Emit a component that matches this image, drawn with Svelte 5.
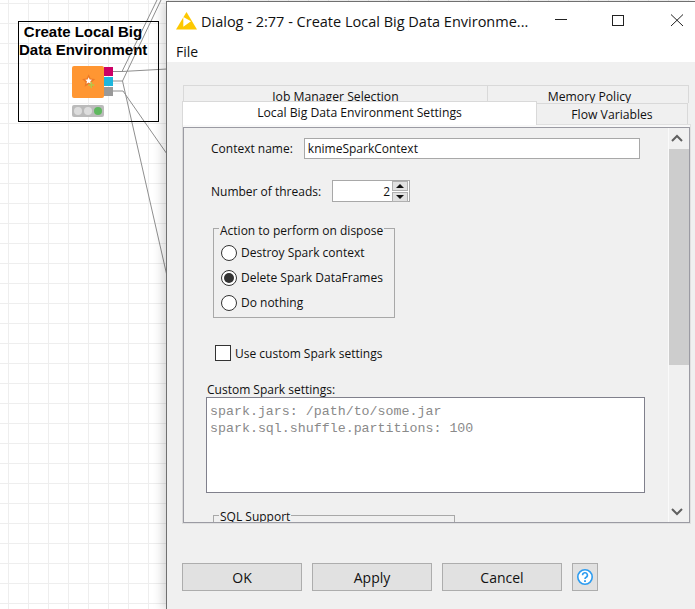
<script>
	const disposeOptions = [
		{ label: 'Destroy Spark context', checked: false },
		{ label: 'Delete Spark DataFrames', checked: true },
		{ label: 'Do nothing', checked: false }
	];
</script>

<div class="canvas">
	<svg class="wires" width="167" height="300" viewBox="0 0 167 300">
		<g fill="none" stroke="#8f8f8f" stroke-width="1">
			<path d="M113 71.500H122L167 69" />
			<path d="M122 71.500L157 0" />
			<path d="M113 81H122.500L161 0" />
			<path d="M122.500 81L167 276" />
			<path d="M113 91H123L167 154" />
		</g>
	</svg>

	<div class="node">
		<div class="node-title">Create Local Big<br />Data Environment</div>
		<div class="node-body">
			<div class="node-icon">
				<svg width="20" height="20" viewBox="0 0 20 20">
					<g transform="translate(3 1) scale(.85)">
						<path d="M9 1.500l2.300 5 5.400.6-4 3.700 1.100 5.400L9 13.500l-4.800 2.700 1.100-5.400-4-3.700 5.400-.6z" fill="#ee7a26" />
						<path d="M9 5l1.200 2.600 2.800.3-2 1.900.5 2.800L9 11.300l-2.500 1.300.5-2.800-2-1.900 2.800-.3z" fill="#fff" />
					</g>
					<path d="M13.300 10v6M10.300 13h6" stroke="#b5c84a" stroke-width="1.400" fill="none" />
				</svg>
			</div>
			<div class="ports">
				<span class="port pink"></span>
				<span class="port cyan"></span>
				<span class="port grey"></span>
			</div>
		</div>
		<div class="traffic">
			<span class="lamp"></span>
			<span class="lamp"></span>
			<span class="lamp on"></span>
		</div>
	</div>

	<div class="dialog">
		<div class="titlebar">
			<svg class="logo" width="21" height="18" viewBox="0 0 21 18">
				<path d="M10.500 0L21 17.500H0z" fill="#fdc800" />
				<path d="M7.300 5L15 9.300 7.300 14.700z" fill="#fff" />
			</svg>
			<span class="title">Dialog - 2:77 - Create Local Big Data Environme...</span>
			<div class="controls">
				<svg width="14" height="14" viewBox="0 0 14 14"><path d="M1 5.500H13" stroke="#222" fill="none" /></svg>
				<svg width="14" height="14" viewBox="0 0 14 14"><rect x=".5" y="1.500" width="11" height="10" stroke="#222" fill="none" /></svg>
				<svg width="14" height="14" viewBox="0 0 14 14"><path d="M1 .5L13 12M13 .5L1 12" stroke="#222" fill="none" /></svg>
			</div>
		</div>
		<div class="menubar">File</div>

		<div class="dialog-body">
			<div class="tabs">
				<div class="tab-row back">
					<div class="tab job">Job Manager Selection</div>
					<div class="tab memory">Memory Policy</div>
				</div>
				<div class="tab-row front">
					<div class="tab active">Local Big Data Environment Settings</div>
					<div class="tab flow">Flow Variables</div>
				</div>
			</div>

			<div class="panel-outer">
				<div class="panel">
					<div class="scroll-content">
						<div class="row context">
							<span>Context name:</span>
							<div class="input">knimeSparkContext</div>
						</div>
						<div class="row threads">
							<span>Number of threads:</span>
							<div class="spinner">
								<span class="spin-value">2</span>
								<div class="spin-buttons">
									<span class="spin-btn"><i class="up"></i></span>
									<span class="spin-btn"><i class="down"></i></span>
								</div>
							</div>
						</div>
						<div class="group dispose">
							<span class="legend">Action to perform on dispose</span>
							{#each disposeOptions as opt}
								<div class="radio-row">
									<span class="radio" class:checked={opt.checked}></span>
									<span>{opt.label}</span>
								</div>
							{/each}
						</div>
						<div class="check-row">
							<span class="checkbox"></span>
							<span>Use custom Spark settings</span>
						</div>
						<div class="custom-label">Custom Spark settings:</div>
						<div class="textarea">spark.jars: /path/to/some.jar
spark.sql.shuffle.partitions: 100</div>
						<div class="group sql">
							<span class="legend">SQL Support</span>
						</div>
					</div>
					<div class="scrollbar">
						<svg width="18" height="21" viewBox="0 0 18 21"><path d="M3 13l5-5 5 5" stroke="#606060" stroke-width="2" fill="none" /></svg>
						<div class="track"><div class="thumb"></div></div>
						<svg width="18" height="21" viewBox="0 0 18 21"><path d="M3 8l5 5 5-5" stroke="#606060" stroke-width="2" fill="none" /></svg>
					</div>
				</div>
			</div>

			<div class="buttons">
				<button>OK</button>
				<button>Apply</button>
				<button>Cancel</button>
				<button class="help" aria-label="Help">
					<svg width="18" height="18" viewBox="0 0 18 18">
						<circle cx="9" cy="9" r="7.200" stroke="#2d9cf0" stroke-width="1.600" fill="#fff" />
						<path d="M6.600 7.200a2.400 2.400 0 1 1 3.600 2c-.9.5-1.200 1-1.200 1.900" stroke="#2d9cf0" stroke-width="1.600" fill="none" />
						<rect x="8.100" y="12.200" width="1.800" height="1.800" fill="#2d9cf0" />
					</svg>
				</button>
			</div>
		</div>
	</div>
</div>

<style>
	:global(body) {
		margin: 0;
		overflow: hidden;
	}

	.canvas {
		position: relative;
		width: 695px;
		height: 609px;
		overflow: hidden;
		background-color: #fff;
		background-image: linear-gradient(to right, #eeeeee 1px, transparent 1px),
			linear-gradient(to bottom, #eeeeee 1px, transparent 1px);
		background-size: 20px 20px;
		background-position: 8px 3px;
		font-family: 'Open Sans', 'Noto Sans', sans-serif;
		color: #111;
	}

	.wires {
		position: absolute;
		left: 0;
		top: 0;
	}

	.node {
		position: absolute;
		left: 18px;
		top: 21px;
		width: 139px;
		height: 99px;
		border: 1px solid #000;
		font-family: 'Liberation Sans', Arial, sans-serif;
	}

	.node-title {
		font-weight: bold;
		font-size: 15px;
		line-height: 18px;
		text-align: center;
		height: 44px;
		color: #000;
		padding: 1px 11px 0 0;
		box-sizing: border-box;
		white-space: nowrap;
	}

	.node-body {
		display: flex;
		margin-left: 53px;
		height: 32px;
	}

	.node-icon {
		width: 32px;
		height: 32px;
		background: #ff9632;
		border-radius: 2px;
		display: flex;
		align-items: center;
		justify-content: center;
	}

	.ports {
		display: flex;
		flex-direction: column;
		gap: 1px;
		padding-top: 1px;
	}

	.port {
		width: 9px;
		height: 9px;
	}

	.pink {
		background: #cc0066;
	}
	.cyan {
		background: #1eb6dc;
	}
	.grey {
		background: #999;
	}

	.traffic {
		display: flex;
		align-items: center;
		justify-content: space-between;
		box-sizing: border-box;
		width: 32px;
		height: 12px;
		margin: 7px 0 0 53px;
		padding: 0 2px;
		background: #bbb;
		border-radius: 2px;
	}

	.lamp {
		width: 8px;
		height: 8px;
		border-radius: 50%;
		background: #ddd;
	}

	.lamp.on {
		background: #5fb85f;
	}

	.dialog {
		position: absolute;
		left: 166px;
		top: 1px;
		width: 529px;
		height: 608px;
		border-left: 1px solid #707070;
		border-top: 1px solid #707070;
		box-sizing: border-box;
		display: flex;
		flex-direction: column;
		background: #fff;
		box-shadow: -3px 0 10px rgba(0, 0, 0, 0.18);
	}

	.titlebar {
		display: flex;
		align-items: center;
		height: 38px;
		padding: 0 11px 0 9px;
		flex-shrink: 0;
	}

	.logo {
		flex-shrink: 0;
	}

	.title {
		margin-left: 4px;
		font-size: 14.5px;
		white-space: nowrap;
	}

	.controls {
		display: flex;
		gap: 44px;
		margin-left: auto;
	}

	.menubar {
		height: 22px;
		line-height: 24px;
		font-size: 14px;
		padding-left: 9px;
		flex-shrink: 0;
	}

	.dialog-body {
		flex: 1;
		background: #f0f0f0;
		padding: 23px 0 0 15px;
		font-size: 12px;
	}

	.tabs {
		width: 508px;
		height: 39px;
		font-size: 12.2px;
	}

	.tab-row {
		display: flex;
	}

	.tab {
		box-sizing: border-box;
		text-align: center;
		border: 1px solid #d9d9d9;
		white-space: nowrap;
	}

	.back {
		height: 18px;
		padding-left: 1px;
	}

	.back .tab {
		height: 18px;
		line-height: 22px;
		border-bottom: none;
		overflow: hidden;
	}

	.job {
		width: 305px;
	}

	.memory {
		width: 201px;
		padding-left: 3px;
		border-left: none;
	}

	.front {
		height: 23px;
		align-items: flex-start;
		margin-top: -2px;
	}

	.active {
		width: 355px;
		height: 24px;
		line-height: 21px;
		background: #fff;
		border-bottom: none;
		position: relative;
		z-index: 1;
	}

	.flow {
		width: 151px;
		height: 21px;
		margin-top: 2px;
		line-height: 22px;
		border-left: none;
		border-bottom: none;
	}

	.panel-outer {
		box-sizing: border-box;
		width: 509px;
		height: 400px;
		background: #f8f8f8;
		border: 1px solid #e0e0e0;
		border-left-color: #d9d9d9;
		padding: 2px 0 1px 0;
	}

	.panel {
		box-sizing: border-box;
		height: 396px;
		width: 507px;
		border: 1px solid #9b9ba3;
		background: #f0f0f0;
		display: flex;
		overflow: hidden;
	}

	.scroll-content {
		flex: 1;
		min-width: 0;
		position: relative;
		overflow: hidden;
	}

	.row {
		display: flex;
		align-items: center;
		margin-left: 27px;
	}

	.context {
		margin-top: 10px;
		height: 21px;
		gap: 11px;
		line-height: 22px;
	}

	.input {
		box-sizing: border-box;
		width: 336px;
		height: 21px;
		line-height: 20px;
		border: 1px solid #a8a8a8;
		background: #fff;
		padding-left: 3px;
	}

	.threads {
		margin-top: 21px;
		height: 22px;
		gap: 11px;
	}

	.spinner {
		box-sizing: border-box;
		width: 78px;
		height: 22px;
		border: 1px solid #a8a8a8;
		background: #fff;
		display: flex;
		align-items: center;
		justify-content: flex-end;
		padding-right: 1px;
	}

	.spin-value {
		margin-right: 2px;
	}

	.spin-buttons {
		display: flex;
		flex-direction: column;
		gap: 1px;
	}

	.spin-btn {
		width: 14px;
		height: 8px;
		background: #e1e1e1;
		border: 1px solid #b0b0b0;
		display: flex;
		align-items: center;
		justify-content: center;
	}

	.spin-btn i {
		width: 0;
		height: 0;
		border-left: 4px solid transparent;
		border-right: 4px solid transparent;
	}

	.up {
		border-bottom: 4px solid #111;
	}

	.down {
		border-top: 4px solid #111;
	}

	.group {
		position: relative;
		box-sizing: border-box;
		border: 1px solid #a8a8a8;
		margin-left: 29px;
	}

	.legend {
		position: absolute;
		left: 5px;
		top: -6px;
		padding: 0 1px;
		background: #f0f0f0;
		line-height: 16px;
		white-space: nowrap;
	}

	.sql .legend {
		top: -7px;
	}

	.dispose {
		width: 182px;
		height: 90px;
		margin-top: 26px;
		padding-top: 11px;
	}

	.radio-row {
		display: flex;
		align-items: center;
		gap: 4px;
		height: 25px;
		margin-left: 7px;
	}

	.radio {
		box-sizing: border-box;
		width: 16px;
		height: 16px;
		border: 1px solid #333;
		border-radius: 50%;
		background: #fff;
		display: flex;
		align-items: center;
		justify-content: center;
	}

	.radio.checked::after {
		content: '';
		width: 10px;
		height: 10px;
		border-radius: 50%;
		background: #333;
	}

	.check-row {
		display: flex;
		align-items: center;
		gap: 4px;
		height: 16px;
		margin: 27px 0 0 31px;
	}

	.checkbox {
		box-sizing: border-box;
		width: 16px;
		height: 16px;
		border: 1px solid #333;
		background: #fff;
	}

	.custom-label {
		margin: 21px 0 0 23px;
		line-height: 16px;
		height: 15px;
	}

	.textarea {
		box-sizing: border-box;
		width: 439px;
		height: 96px;
		margin: 0 0 0 22px;
		padding: 5px 3px;
		border: 1px solid #80808c;
		background: #fff;
		color: #8a8a8a;
		font-family: 'Liberation Mono', 'Courier New', monospace;
		font-size: 13.3px;
		line-height: 17px;
		white-space: pre;
	}

	.sql {
		width: 242px;
		height: 60px;
		margin-top: 22px;
	}

	.scrollbar {
		width: 20px;
		flex-shrink: 0;
		background: #f0f0f0;
		border-left: 1px solid #fafafa;
		display: flex;
		flex-direction: column;
	}

	.track {
		flex: 1;
	}

	.thumb {
		height: 216px;
		background: #cdcdcd;
	}

	.buttons {
		display: flex;
		gap: 10px;
		margin-top: 39px;
	}

	button {
		box-sizing: border-box;
		width: 120px;
		height: 28px;
		background: #e1e1e1;
		border: 1px solid #adadad;
		border-radius: 0;
		padding: 0;
		font-family: inherit;
		font-size: 14px;
		color: #111;
		display: flex;
		align-items: center;
		justify-content: center;
	}

	.help {
		width: 26px;
	}
</style>
